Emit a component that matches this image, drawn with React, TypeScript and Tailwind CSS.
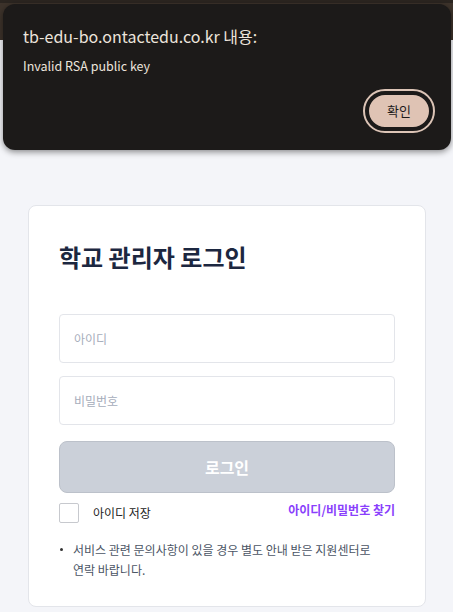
export default function App() {
  return (
    <div
      className="relative min-h-screen w-full bg-[#f4f5f9]"
      style={{ fontFamily: '"Noto Sans CJK KR", "Noto Sans", sans-serif' }}
    >
      <div className="h-[40px] w-full border-t-[3px] border-[#2b2520] bg-[#3d332b]" />

      <div className="pt-[165px] px-[28px] pb-[7px] pr-[27px]">
        <div className="rounded-lg border border-[#e3e5ea] bg-white px-[30px] pt-[34px] pb-[26px]">
          <h1 className="text-[24px] font-bold leading-[34px] text-[#1c2740]">학교 관리자 로그인</h1>

          <div className="mt-[40px] flex flex-col gap-[13px]">
            <input
              type="text"
              placeholder="아이디"
              className="h-[49px] w-full rounded-[4px] border border-[#e3e5ea] px-[14px] text-[12px] text-[#222] placeholder:text-[#a6adbb] outline-none"
            />
            <input
              type="password"
              placeholder="비밀번호"
              className="h-[49px] w-full rounded-[4px] border border-[#e3e5ea] px-[14px] text-[12px] text-[#222] placeholder:text-[#a6adbb] outline-none"
            />
          </div>

          <button
            type="button"
            className="mt-[16px] h-[52px] w-full rounded-lg border border-[#bcc1ca] bg-[#cbd0d9] text-[16px] font-bold text-white"
          >
            로그인
          </button>

          <div className="mt-[10px] flex items-center justify-between">
            <label className="flex items-center gap-[14px]">
              <span className="h-[20px] w-[20px] rounded-[2px] border border-[#c7c9ce] bg-white" />
              <span className="text-[12px] text-[#222]">아이디 저장</span>
            </label>
            <a className="-mt-[6px] text-[12px] font-bold text-[#8a3ffc]">아이디/비밀번호 찾기</a>
          </div>

          <ul className="mt-[17px] pl-[14px] text-[12px] leading-[20px] text-[#4b5565]">
            <li className="relative break-keep pr-[20px]">
              <span className="absolute -left-[13px] top-[8px] h-[3px] w-[3px] rounded-full bg-[#333]" />
              서비스 관련 문의사항이 있을 경우 별도 안내 받은 지원센터로 연락 바랍니다.
            </li>
          </ul>
        </div>
      </div>

      <div
        className="absolute left-[3px] right-[2px] top-[4px] h-[146px] rounded-[12px] bg-[#1c1a19] shadow-[0_2px_6px_rgba(0,0,0,0.45)]"
      >
        <div className="pl-[20px] pt-[21px] text-[16px] leading-[22px] text-[#ece4dc]">
          tb-edu-bo.ontactedu.co.kr 내용:
        </div>
        <div className="pl-[20px] pt-[10px] text-[12.5px] leading-[18px] text-[#ece4dc]">
          Invalid RSA public key
        </div>
        <div className="absolute right-[16px] top-[85px] rounded-full border-[2px] border-[#dcc4b6] p-[2px]">
          <button
            type="button"
            className="h-[36px] w-[64px] rounded-full border-[2px] border-[#1c1a19] bg-[#dfc3b4] text-[13px] text-[#1c1a19]"
          >
            확인
          </button>
        </div>
      </div>
    </div>
  );
}
